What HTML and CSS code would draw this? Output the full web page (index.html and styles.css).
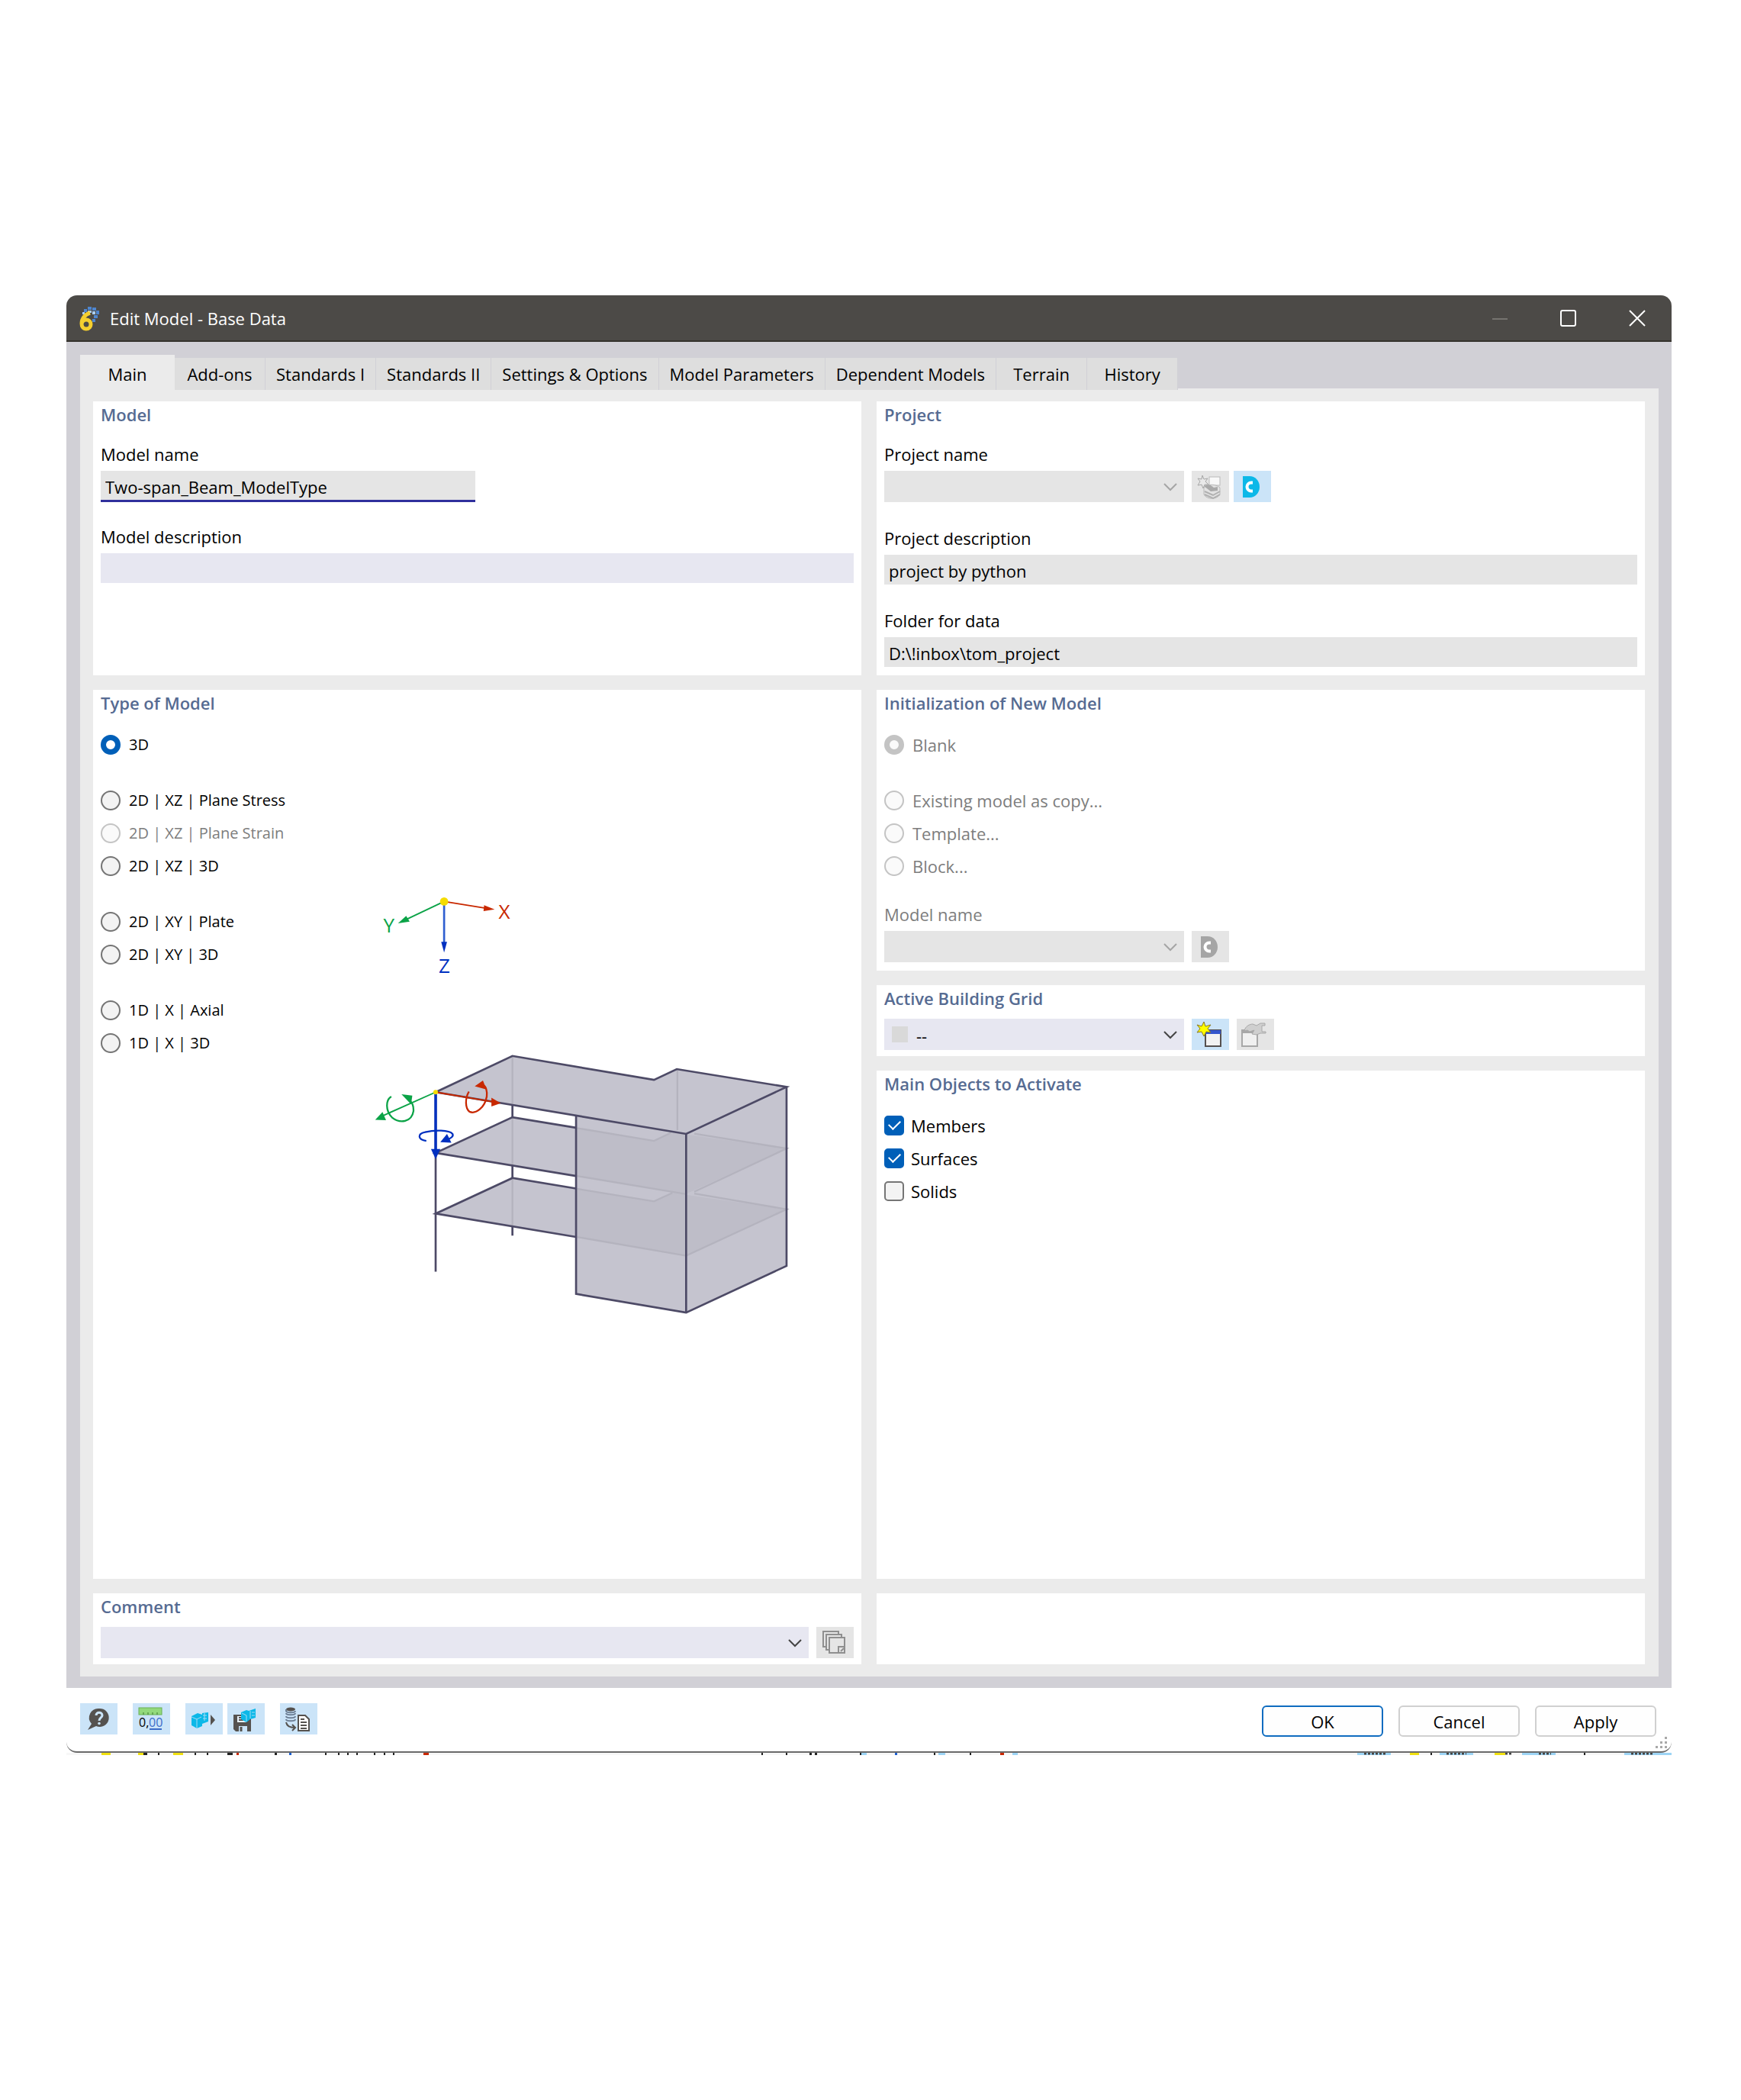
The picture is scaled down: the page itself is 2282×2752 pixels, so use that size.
FILE: index.html
```html
<!DOCTYPE html>
<html lang="en">
<head>
<meta charset="utf-8">
<title>Edit Model - Base Data</title>
<link rel="stylesheet" href="styles.css">
</head>
<body>
<svg class="defs" aria-hidden="true">
  <symbol id="chevron" viewBox="0 0 20 12"><path d="M2 2l8 8 8-8" fill="none" stroke="currentColor" stroke-width="2"/></symbol>
  <symbol id="center" viewBox="0 0 22 28"><path d="M0 0h9c7 0 13 6 13 14s-6 14-13 14H0z" fill="currentColor"/><path d="M13 8.500H11a5.500 5.500 0 0 0 0 11h2" fill="none" stroke="#fff" stroke-width="4"/></symbol>
</svg>
<main class="dialog">
  <header class="titlebar">
    <svg class="logo" viewBox="0 0 28 34" aria-hidden="true">
      <g fill="#4f86cf"><rect x="12" y="2" width="5" height="4"/><rect x="18" y="3" width="5" height="4"/><rect x="7" y="5" width="4" height="4"/><rect x="23" y="7" width="4" height="5"/><rect x="20" y="13" width="5" height="4"/><rect x="18" y="18" width="4" height="4"/></g>
      <g fill="#a9cdf2"><rect x="12" y="7" width="5" height="3"/><rect x="18" y="8" width="4" height="4"/><rect x="5" y="9" width="3" height="3"/></g>
      <path d="M15 10C8 12 4 18 4 24c0 4 2 7 6 7s6-3 6-6-2-6-6-6c-3 0-5 2-6 5" fill="none" stroke="#f5cf2f" stroke-width="5"/>
    </svg>
    <h1 class="title">Edit Model - Base Data</h1>
    <button class="winbtn" disabled aria-label="Minimize"><svg viewBox="0 0 24 24"><path d="M2 13h20" stroke="#75746f" stroke-width="2"/></svg></button>
    <button class="winbtn" aria-label="Maximize"><svg viewBox="0 0 24 24"><rect x="2" y="2" width="19" height="20" rx="2" fill="none" stroke="#fff" stroke-width="2"/></svg></button>
    <button class="winbtn" aria-label="Close"><svg viewBox="0 0 24 24"><path d="M2 2l20 20M22 2L2 22" stroke="#fff" stroke-width="2"/></svg></button>
  </header>

  <div class="workspace">
    <nav class="tabs" role="tablist">
      <button class="tab active" role="tab" aria-selected="true">Main</button>
      <button class="tab" role="tab">Add-ons</button>
      <button class="tab" role="tab">Standards I</button>
      <button class="tab" role="tab">Standards II</button>
      <button class="tab" role="tab">Settings &amp; Options</button>
      <button class="tab" role="tab">Model Parameters</button>
      <button class="tab" role="tab">Dependent Models</button>
      <button class="tab" role="tab">Terrain</button>
      <button class="tab" role="tab">History</button>
    </nav>

    <div class="panel">
      <section class="card">
        <h2>Model</h2>
        <div class="fields">
          <div class="field">
            <label for="model-name">Model name</label>
            <input class="box half focused" id="model-name" type="text" value="Two-span_Beam_ModelType" readonly>
          </div>
          <div class="field">
            <label for="model-desc">Model description</label>
            <input class="box editable" id="model-desc" type="text">
          </div>
        </div>
      </section>

      <section class="card">
        <h2>Project</h2>
        <div class="fields loose">
          <div class="field">
            <label for="project-name">Project name</label>
            <div class="row">
              <span class="combo short"><select id="project-name" disabled><option></option></select><svg class="chev"><use href="#chevron"/></svg></span>
              <div class="pair">
                <button class="tool off" disabled aria-label="New project"><svg viewBox="0 0 36 36">
                  <rect x="18" y="5" width="14" height="11" fill="#f8f8f8" stroke="#b9b9b9"/>
                  <path d="M9 3l2 5 5-1-3 4 4 4-5 0-2 5-2-5-5 1 3-5-3-4 5 1z" fill="#e9e9e9" stroke="#a6a6a6"/>
                  <path d="M11 19c5-5 15-5 21 0v9c-4 7-17 7-21 0z" fill="#e2e2e2" stroke="#b9b9b9"/>
                  <path d="M11 17c4-3 9-2 13 2l5-1v5l-9 1z" fill="#a9a9a9"/>
                  <path d="M12 28l11 5 9-5M12 24l11 5 9-5" fill="none" stroke="#b0b0b0" stroke-width="2"/>
                </svg></button>
                <button class="tool" aria-label="Dlubal Center"><svg class="center cyan"><use href="#center"/></svg></button>
              </div>
            </div>
          </div>
          <div class="field">
            <label for="project-desc">Project description</label>
            <input class="box" id="project-desc" type="text" value="project by python" readonly>
          </div>
          <div class="field">
            <label for="folder">Folder for data</label>
            <input class="box" id="folder" type="text" value="D:\!inbox\tom_project" readonly>
          </div>
        </div>
      </section>

      <section class="card">
        <h2>Type of Model</h2>
        <div class="model-type">
          <div class="choices">
            <div class="group">
              <label><input type="radio" name="type" checked>3D</label>
            </div>
            <div class="group">
              <label><input type="radio" name="type">2D | XZ | Plane Stress</label>
              <label class="dim"><input type="radio" name="type" disabled>2D | XZ | Plane Strain</label>
              <label><input type="radio" name="type">2D | XZ | 3D</label>
            </div>
            <div class="group">
              <label><input type="radio" name="type">2D | XY | Plate</label>
              <label><input type="radio" name="type">2D | XY | 3D</label>
            </div>
            <div class="group">
              <label><input type="radio" name="type">1D | X | Axial</label>
              <label><input type="radio" name="type">1D | X | 3D</label>
            </div>
          </div>
          <svg class="scene" viewBox="0 0 1568 1568" role="img" aria-label="Three-dimensional building model">
            <g fill="none" stroke-width="5">
              <path d="M293 82L165 143" stroke="#0ba347"/>
              <path d="M293 82L435 105" stroke="#c82800"/>
              <path d="M293 82V225" stroke="#2f5fd0" stroke-width="7"/>
            </g>
            <path d="M135 157L163 131 175 151z" fill="#0ba347"/>
            <path d="M466 109L430 95 428 115z" fill="#c82800"/>
            <path d="M293 257L283 220h20z" fill="#0030c0"/>
            <circle cx="293" cy="82" r="14" fill="#f5dc00"/>
            <g class="axis">
              <text x="104" y="187" fill="#0ba347">Y</text>
              <text x="499" y="141" fill="#c82800">X</text>
              <text x="294" y="326" fill="#0030c0">Z</text>
            </g>

            <path d="M264 735L527 611 1012 693 1090 656 1466 717V1330L1122 1490 745 1426V816z" fill="#c5c4cf"/>
            <path d="M264 943L527 821 745 857V1022z" fill="#c5c4cf"/>
            <path d="M264 1151L527 1029 745 1065V1231z" fill="#c5c4cf"/>
            <g fill="#bebdc8">
              <path d="M748 858L1012 902 1070 874 1122 880 1466 928 1122 1083 748 1022z"/>
              <path d="M748 1066L1012 1109 1075 1080 1466 1136 1122 1295 748 1231z"/>
            </g>
            <g fill="none" stroke="#b4b3be" stroke-width="6">
              <path d="M748 858L1012 902 1070 874M1150 877L1466 928 1150 1076M748 1022L1122 1084"/>
              <path d="M748 1066L1012 1109 1075 1080M1150 1082L1466 1136 1122 1295 748 1231M1092 660V865M527 615V775M527 825V985M527 1033V1192"/>
            </g>
            <g fill="none" stroke="#4d4a66" stroke-width="7">
              <path d="M264 735L527 611 1012 693 1090 656 1466 717 1122 878 264 735"/>
              <path d="M745 816V1426L1122 1490 1466 1330V717M1122 878V1490"/>
              <path d="M745 857L527 821 264 943 745 1022M745 1065L527 1029 264 1151 745 1231"/>
              <path d="M264 735V1350M527 780V821M527 988V1029M527 1195V1226"/>
            </g>
            <path d="M264 735L460 768" stroke="#c82800" stroke-width="5"/>
            <path d="M487 773L455 754V784z" fill="#c82800"/>
            <path d="M378 733C364 757 365 790 380 802 400 811 432 790 439 750 441 730 436 715 428 712" fill="none" stroke="#c82800" stroke-width="6"/>
            <path d="M398 715L426 695 438 726z" fill="#c82800"/>
            <path d="M264 735L85 815" stroke="#0ba347" stroke-width="5"/>
            <path d="M57 830L82 803 94 831z" fill="#0ba347"/>
            <path d="M112 750C92 762 92 800 115 822 142 843 182 838 188 800 189 782 182 770 176 765" fill="none" stroke="#0ba347" stroke-width="6"/>
            <path d="M147 742L184 747 180 777z" fill="#0ba347"/>
            <path d="M264 735V940" stroke="#0030c0" stroke-width="9"/>
            <path d="M264 964L248 930h32z" fill="#0030c0"/>
            <path d="M232 902C203 898 200 878 228 872 260 864 310 864 322 878 326 886 316 894 305 896" fill="none" stroke="#0030c0" stroke-width="6"/>
            <path d="M280 906L303 878 318 908z" fill="#0030c0"/>
            <circle cx="264" cy="735" r="8" fill="#f5dc00"/>
          </svg>
        </div>
      </section>

      <div class="stack">
        <section class="card">
          <h2>Initialization of New Model</h2>
          <div class="choices dim">
            <div class="group">
              <label><input type="radio" name="init" checked disabled>Blank</label>
            </div>
            <div class="group">
              <label><input type="radio" name="init" disabled>Existing model as copy...</label>
              <label><input type="radio" name="init" disabled>Template...</label>
              <label><input type="radio" name="init" disabled>Block...</label>
            </div>
          </div>
          <div class="field after dim">
            <label for="init-model">Model name</label>
            <div class="row">
              <span class="combo short"><select id="init-model" disabled><option></option></select><svg class="chev"><use href="#chevron"/></svg></span>
              <button class="tool off" disabled aria-label="Dlubal Center"><svg class="center"><use href="#center"/></svg></button>
            </div>
          </div>
        </section>

        <section class="card compact">
          <h2><label for="grid">Active Building Grid</label></h2>
          <div class="row">
            <span class="combo short editable"><select class="swatched" id="grid"><option>--</option></select><span class="swatch"></span><svg class="chev"><use href="#chevron"/></svg></span>
            <button class="tool" aria-label="New building grid"><svg viewBox="0 0 36 36">
              <rect x="13" y="12" width="20" height="21" fill="#f2f2f2" stroke="#55504f" stroke-width="2"/><rect x="13" y="12" width="20" height="5" fill="#3355cc"/>
              <path d="M11 1l2 6 7-2-4 5 4 5-6-1-3 6-3-6-6 1 4-5-4-5 6 2z" fill="#ffff00" stroke="#8a7a20"/>
            </svg></button>
            <button class="tool off" disabled aria-label="Edit building grid"><svg viewBox="0 0 36 36">
              <rect x="2" y="12" width="20" height="21" fill="#f0f0f0" stroke="#a8a8a8" stroke-width="2"/><path d="M2 13h20v3H2z" fill="#a8a8a8"/>
              <path d="M5 13c1-6 7-9 11-9l5 2 5-3h6v3h-4v8h5v2h-7l-5 2-6-1 3-5-6 2-3-2z" fill="#cfcfcf" stroke="#a8a8a8"/>
            </svg></button>
          </div>
        </section>

        <section class="card grow">
          <h2>Main Objects to Activate</h2>
          <div class="choices ticks">
            <div class="group">
              <label><input type="checkbox" checked>Members</label>
              <label><input type="checkbox" checked>Surfaces</label>
              <label><input type="checkbox">Solids</label>
            </div>
          </div>
        </section>
      </div>

      <section class="card compact">
        <h2><label for="comment">Comment</label></h2>
        <div class="row">
          <span class="combo editable"><select id="comment"><option></option></select><svg class="chev"><use href="#chevron"/></svg></span>
          <button class="tool off" disabled aria-label="Comment library"><svg viewBox="0 0 36 36" fill="#e5e5e5" stroke="#8f8f8f" stroke-width="2">
            <rect x="4" y="3" width="20" height="20"/><rect x="8" y="7" width="20" height="20"/><rect x="12" y="11" width="20" height="20"/><path d="M24 31v-8h8M27 29l4-4"/>
          </svg></button>
        </div>
      </section>

      <section class="card"></section>
    </div>
  </div>

  <footer class="footer">
    <div class="tools">
      <button class="tool" aria-label="Help"><svg viewBox="0 0 36 36">
        <path d="M20 4a12 12 0 1 1-4 23L5 32l5-8A12 12 0 0 1 20 4z" fill="#55524f"/><path d="M16 13c0-5 8-5 8 0 0 3-4 3-4 7" fill="none" stroke="#cbe4f8" stroke-width="3"/><circle cx="20" cy="23.500" r="1.800" fill="#cbe4f8"/>
      </svg></button>
      <button class="tool" aria-label="Units and decimal places"><svg viewBox="0 0 36 36">
        <rect x="3" y="3" width="30" height="9" fill="#93d97c" stroke="#68b055"/><path d="M9 12V9M15 12V9M21 12V9M27 12V9" stroke="#3c7a30"/>
        <text class="digits" x="3" y="28" fill="#000">0,</text><text class="digits" x="16" y="28" fill="#3c6cc8">00</text><path d="M17 31h16" stroke="#3c6cc8" stroke-width="2"/>
      </svg></button>
      <button class="tool" aria-label="Load model type"><svg viewBox="0 0 36 36">
        <path d="M3 14l8-4 6 2v15l-7 3-7-4z" fill="#0cb8e8"/><path d="M17 10l8-1v12l-8 3z" fill="#0cb8e8"/><path d="M3 15l7 3v12M10 18l6-3M18 13h5M18 17h5M20 10v10" stroke="#a5dcf5" fill="none"/><path d="M28 12l6 7-6 7z" fill="#55524f"/>
      </svg></button>
      <button class="tool" aria-label="Save as template"><svg viewBox="0 0 36 36">
        <path d="M3 12h23v22H6l-3-3z" fill="#55524f"/><path d="M8 14h12v8H8z" fill="#e8f2fb"/><path d="M10 16h6M10 19h6" stroke="#55524f" stroke-width="2"/><path d="M10 27h11v7H10z" fill="#cbe4f8"/><path d="M13 28v6" stroke="#55524f" stroke-width="3"/>
        <path d="M13 9l7-3 3 1 9-3v12l-7 2-5 4-7-4z" fill="#0cb8e8"/><path d="M14 10l6 3v8M25 7v10M27 9h4M27 13h4" stroke="#a5dcf5" fill="none"/>
      </svg></button>
      <button class="tool" aria-label="Import data"><svg viewBox="0 0 36 36">
        <ellipse cx="9" cy="5" rx="6" ry="2.500" fill="#55524f"/><path d="M3 5v2c0 3 12 3 12 0M3 10c0 3 12 3 12 0M3 14c0 3 12 3 12 0M3 18c0 3 12 3 12 0" fill="none" stroke="#6d7f95" stroke-width="2"/>
        <path d="M3 22c1 5 5 7 11 7M11 25l4 4-4 4" fill="none" stroke="#55524f" stroke-width="2"/>
        <path d="M19 13h9l5 5v15H19z" fill="#fff" stroke="#55524f" stroke-width="2"/><path d="M22 18h5M22 22h8M22 26h8M22 30h8" stroke="#55524f" stroke-width="2"/>
      </svg></button>
    </div>
    <div class="actions">
      <button class="action primary">OK</button>
      <button class="action">Cancel</button>
      <button class="action">Apply</button>
    </div>
    <svg class="grip" viewBox="0 0 18 18" aria-hidden="true"><path d="M13 1h3v3h-3zM13 7h3v3h-3zM13 13h3v3h-3zM7 7h3v3H7zM7 13h3v3H7zM1 13h3v3H1z" fill="#a8a8a8"/></svg>
  </footer>
  <svg class="backdrop" viewBox="0 0 2104 3" preserveAspectRatio="none" aria-hidden="true">
    <rect width="2104" height="3" fill="#f7f7f7"/>
    <g fill="#f0e010"><path d="M46 0h12v3H46zM94 0h7v3h-7zM140 0h13v3h-13zM1761 0h12v3h-12zM1872 0h14v3h-14z"/></g>
    <g fill="#9dd4f5"><path d="M1041 0h8v3h-8zM1143 0h9v3h-9zM1240 0h7v3h-7zM1692 0h44v3h-44zM1800 0h44v3h-44zM1908 0h44v3h-44zM2042 0h62v3h-62z"/></g>
    <g fill="#222"><path d="M101 0h5v3h-5zM120 0h2v3h-2zM168 0h2v3h-2zM184 0h2v3h-2zM211 0h7v3h-7zM273 0h3v3h-3zM339 0h2v3h-2zM356 0h2v3h-2zM368 0h2v3h-2zM380 0h2v3h-2zM403 0h2v3h-2zM416 0h2v3h-2zM428 0h2v3h-2zM911 0h2v3h-2zM943 0h2v3h-2zM974 0h3v3h-3zM981 0h3v3h-3zM1040 0h2v3h-2zM1137 0h2v3h-2zM1184 0h2v3h-2zM1788 0h2v3h-2zM1989 0h2v3h-2z"/></g>
    <path d="M1701 1h28M1809 1h26M1886 1h8M1930 1h16M2051 1h30" stroke="#444" stroke-width="3" stroke-dasharray="3 2"/>
    <g fill="#c82800"><path d="M223 0h3v3h-3zM468 0h7v3h-7zM1224 0h5v3h-5z"/></g>
    <g fill="#1d5fd0"><path d="M292 0h3v3h-3zM1086 0h3v3h-3z"/></g>
  </svg>
</main>
</body>
</html>
```
FILE: styles.css
```css
* { box-sizing: border-box; }

body {
  margin: 0;
  min-height: 100vh;
  padding: 387px 91px 452px 87px;
  display: flex;
  background: #fff;
  color: #000;
  font: 22px/30px "Open Sans", "Noto Sans", sans-serif;
}

.defs { display: none; }

button, input, select { font: inherit; color: inherit; margin: 0; border-radius: 0; }
button { padding: 0; border: 0; background: none; }

.dialog { flex: 1; min-width: 0; display: flex; flex-direction: column; }

/* Title bar */
.titlebar {
  height: 61px;
  display: flex;
  align-items: center;
  padding-left: 16px;
  background: #4c4a47;
  border-bottom: 2px solid #34322c;
  border-radius: 14px 14px 0 0;
  color: #fff;
}
.logo { width: 28px; height: 34px; }
.title { flex: 1; margin: 0 0 0 13px; font-size: 22px; font-weight: 400; }
.winbtn { width: 90px; height: 58px; }
.winbtn svg { width: 24px; height: 24px; display: block; margin: auto; }

/* Tabs and panel */
.workspace {
  flex: 1;
  display: flex;
  flex-direction: column;
  padding: 17px 17px 15px 18px;
  background: #d1d0d6;
}
.tabs { display: flex; align-items: flex-end; position: relative; margin-bottom: -2px; }
.tab {
  height: 42px;
  min-width: 119px;
  padding: 0 14px;
  background: #dedede;
  border-right: 1px solid #d1d0d6;
}
.tab.active { height: 46px; min-width: 124px; padding-top: 3px; background: #ebebeb; border: 0; }
.panel {
  flex: 1;
  display: grid;
  grid-template-columns: 1fr 1fr;
  grid-template-rows: auto 1fr auto;
  gap: 19px 20px;
  padding: 17px 18px 16px 17px;
  background: #ebebeb;
}
.stack { display: flex; flex-direction: column; gap: 19px; }
.card { padding: 2px 10px 11px; background: #fff; min-width: 0; }
.card.compact { padding-bottom: 8px; }
.card.grow { flex: 1; }
h2 { margin: 0 0 22px; font-size: 22px; line-height: 30px; font-weight: 600; color: #566b92; }
.compact h2 { margin-bottom: 12px; }

/* Fields */
.fields { display: flex; flex-direction: column; gap: 30px; }
.fields.loose { gap: 32px; }
.field { display: flex; flex-direction: column; gap: 7px; }
.field.after { margin-top: 27px; }
.row { display: flex; gap: 10px; }
.pair { display: flex; gap: 6px; }
.box {
  width: 100%;
  height: 39px;
  padding: 2px 6px 0;
  border: 0;
  background: #e5e5e5;
}
.box.half { width: 491px; }
.box.focused { height: 41px; padding-top: 3px; border-bottom: 3px solid #30309c; outline: 0; }
.box.editable { background: #e7e7f1; }

.combo { flex: 1; display: grid; align-items: center; height: 41px; background: #e5e5e5; color: #a5a5a5; }
.combo.short { flex: 0 0 393px; }
.combo.editable { background: #e7e7f1; color: #444; }
.combo > * { grid-area: 1 / 1; }
.combo select {
  appearance: none;
  width: 100%;
  height: 41px;
  padding: 3px 8px 0;
  border: 0;
  background: transparent;
  color: #000;
}
.combo select.swatched { padding-left: 42px; }
.swatch { width: 21px; height: 21px; margin-left: 10px; background: #d9d9d9; pointer-events: none; }
.chev { width: 20px; height: 12px; justify-self: end; margin-right: 8px; pointer-events: none; }

.tool { flex: none; width: 49px; height: 41px; background: #cbe4f8; }
.tool.off { background: #e5e5e5; }
.tool svg { display: block; width: 36px; height: 36px; margin: 0 0 0 5px; }
.tool svg.center { width: 22px; height: 28px; margin-left: 12px; color: #a5a5a5; }
.tool svg.cyan { color: #0cb8e8; }

/* Radio buttons and tick boxes */
h2 + .choices, .model-type { margin-top: -4px; }
.choices, .group { display: flex; flex-direction: column; }
.choices { gap: 30px; }
.choices label { display: flex; align-items: center; gap: 11px; height: 43px; }
.choices.ticks label { gap: 9px; }
.dim { color: #7d7d7d; }
input[type="radio"], input[type="checkbox"] {
  appearance: none;
  flex: none;
  width: 26px;
  height: 26px;
  border: 2px solid #757575;
  border-radius: 50%;
  background: #f3f3f3;
}
input[type="radio"]:checked { border: 7px solid #005fb8; background: #fff; }
input[type="radio"]:disabled { border-color: #c4c4c4; background: #fafafa; }
input[type="checkbox"] { display: grid; place-items: center; border-radius: 5px; }
input[type="checkbox"]:checked { border-color: #005fb8; background: #005fb8; }
input[type="checkbox"]:checked::before {
  content: "";
  width: 13px;
  height: 7px;
  margin-bottom: 4px;
  border: solid #fff;
  border-width: 0 0 2px 2px;
  transform: rotate(-45deg);
}

.model-type { display: flex; font-size: 20px; }
.model-type .choices { width: 338px; }
.scene { width: 600px; height: 600px; margin-top: 196px; }
.axis { font-size: 68px; text-anchor: middle; }

/* Footer */
.footer {
  position: relative;
  display: flex;
  justify-content: space-between;
  padding: 20px 20px 20px 18px;
  height: 85px;
  border-bottom: 2px solid #6a6a6a;
  border-radius: 0 0 14px 14px;
  background: #fff;
}
.tools { display: flex; gap: 6px; }
.tools .tool:nth-child(odd):not(:first-child), .tools .tool:nth-child(2) { margin-left: 14px; }
.actions { display: flex; gap: 20px; padding-top: 3px; }
.action {
  width: 159px;
  height: 41px;
  border: 2px solid #d0d0d0;
  border-radius: 6px;
  background: #fefefe;
}
.action.primary { border-color: #0f6cc0; }
.digits { font-size: 16px; }
.grip { position: absolute; right: 4px; bottom: 2px; width: 18px; height: 18px; }
.backdrop { display: block; width: 100%; height: 3px; }
```
